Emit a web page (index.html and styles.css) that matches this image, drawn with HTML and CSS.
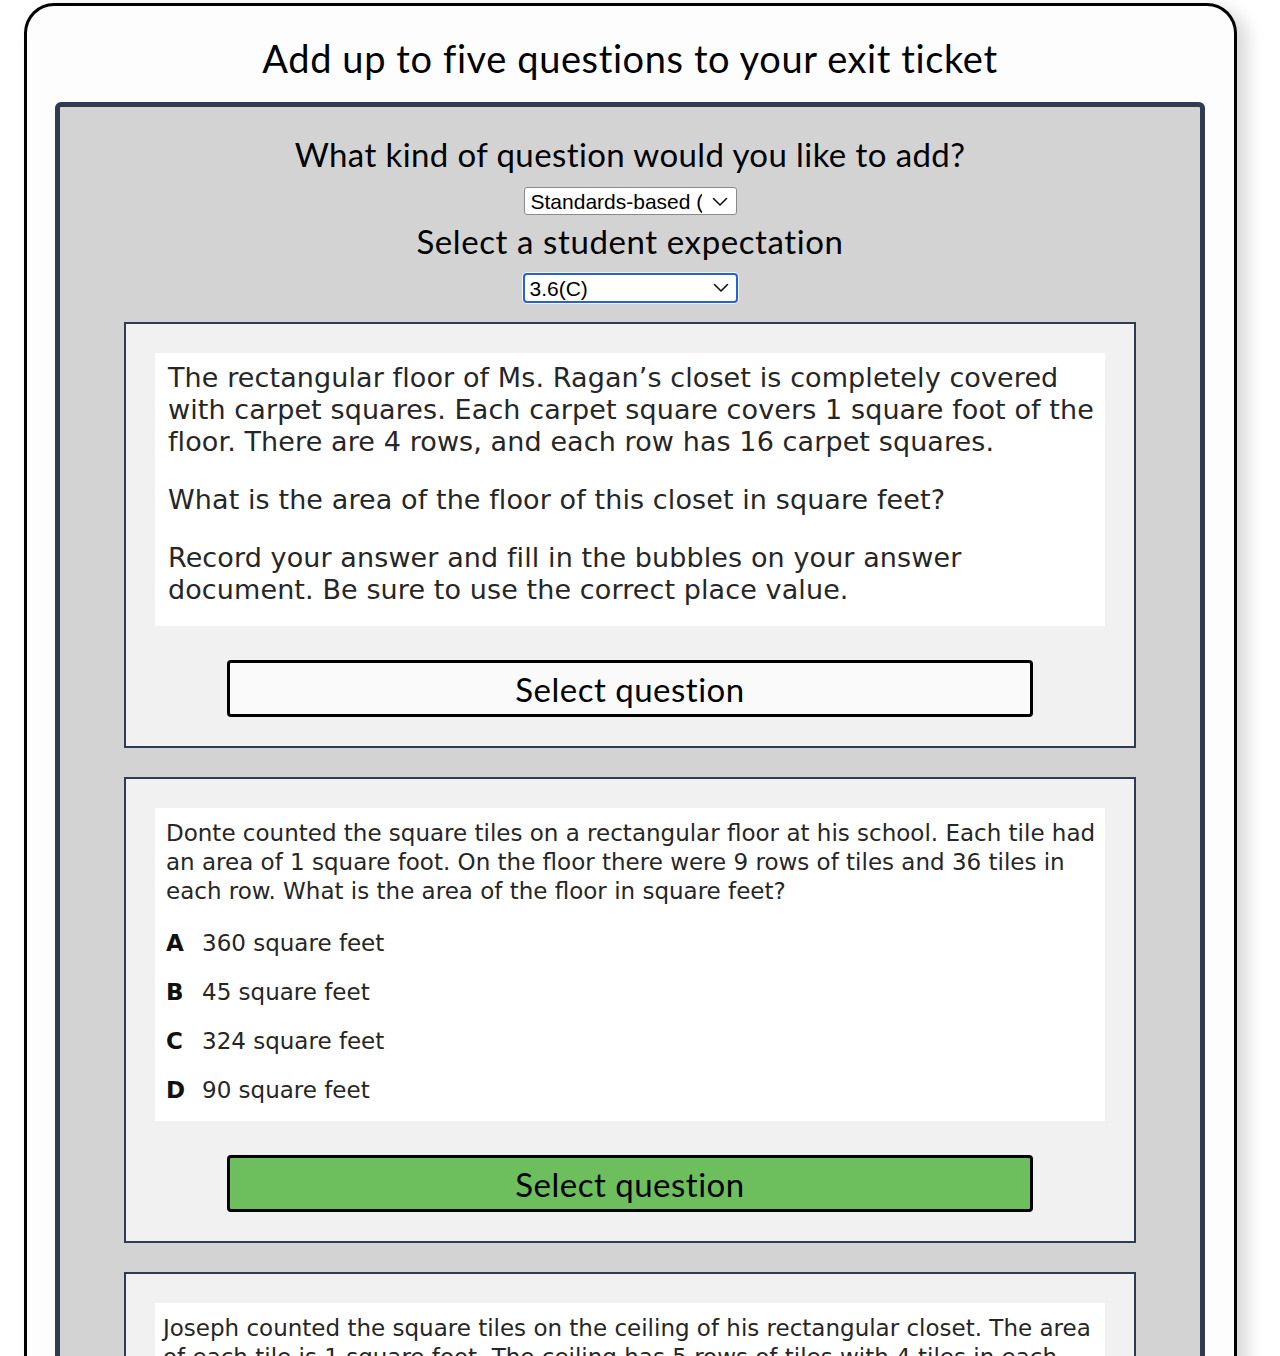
FILE: index.html
```html
<!DOCTYPE html>
<html lang="en">
<head>
<meta charset="utf-8">
<title>Exit ticket</title>
<link rel="stylesheet" href="styles.css">
</head>
<body>
<div class="page">
  <div class="ticket">
    <h1 class="title">Add up to five questions to your exit ticket</h1>
    <div class="panel">
      <h2 class="prompt prompt-first">What kind of question would you like to add?</h2>
      <div class="select-wrap">
        <select class="select"><option>Standards-based (TEKS)</option></select>
        <svg class="chev" width="16" height="10" viewBox="0 0 16 10"><path d="M1.5 1.5 L8 8 L14.5 1.5" fill="none" stroke="#111" stroke-width="1.6" stroke-linecap="round" stroke-linejoin="round"/></svg>
      </div>
      <h2 class="prompt prompt-second">Select a student expectation</h2>
      <div class="select-wrap select-wrap-focus">
        <select class="select select-focus"><option>3.6(C)</option></select>
        <svg class="chev" width="16" height="10" viewBox="0 0 16 10"><path d="M1.5 1.5 L8 8 L14.5 1.5" fill="none" stroke="#111" stroke-width="1.6" stroke-linecap="round" stroke-linejoin="round"/></svg>
      </div>

      <div class="qcard">
        <div class="qbody qbody-one">
          <p>The rectangular floor of Ms. Ragan’s closet is completely covered<br>with carpet squares. Each carpet square covers 1 square foot of the<br>floor. There are 4 rows, and each row has 16 carpet squares.</p>
          <p>What is the area of the floor of this closet in square feet?</p>
          <p>Record your answer and fill in the bubbles on your answer<br>document. Be sure to use the correct place value.</p>
        </div>
        <button class="select-btn">Select question</button>
      </div>

      <div class="qcard">
        <div class="qbody qbody-two">
          <p>Donte counted the square tiles on a rectangular floor at his school. Each tile had<br>an area of 1 square foot. On the floor there were 9 rows of tiles and 36 tiles in<br>each row. What is the area of the floor in square feet?</p>
          <ul class="options">
            <li><b>A</b><span>360 square feet</span></li>
            <li><b>B</b><span>45 square feet</span></li>
            <li><b>C</b><span>324 square feet</span></li>
            <li><b>D</b><span>90 square feet</span></li>
          </ul>
        </div>
        <button class="select-btn select-btn-active">Select question</button>
      </div>

      <div class="qcard">
        <div class="qbody qbody-three">
          <p>Joseph counted the square tiles on the ceiling of his rectangular closet. The area<br>of each tile is 1 square foot. The ceiling has 5 rows of tiles with 4 tiles in each<br>row. What is the area of the ceiling in square feet?</p>
        </div>
        <button class="select-btn">Select question</button>
      </div>
    </div>
  </div>
</div>
</body>
</html>
```

FILE: styles.css
```css
html, body {
  margin: 0;
  padding: 0;
  background: #ffffff;
}

.page {
  height: 1356px;
  overflow: hidden;
  padding: 3px 0 0 24px;
  box-sizing: border-box;
}

.ticket {
  width: 1213px;
  box-sizing: border-box;
  border: 3px solid #000;
  border-bottom: none;
  border-radius: 30px 30px 0 0;
  background: #fdfdfd;
  padding: 0 29px 40px 28px;
  min-height: 1500px;
  box-shadow: 10px 6px 18px rgba(0, 0, 0, 0.16);
}

.title {
  font-family: "Lato", "DejaVu Sans", sans-serif;
  font-weight: 400;
  font-size: 38px;
  line-height: 44px;
  margin: 30px 0 22px;
  text-align: center;
  color: #000;
  letter-spacing: 0.6px;
}

.panel {
  border: 5px solid #2e3b52;
  border-radius: 6px;
  background: #d3d3d3;
  padding: 0 64px 40px;
  display: flex;
  flex-direction: column;
  align-items: center;
}

.prompt {
  font-family: "Lato", "DejaVu Sans", sans-serif;
  font-weight: 400;
  font-size: 33px;
  line-height: 40px;
  margin: 27px 0 13px;
  color: #000;
  letter-spacing: 0.6px;
}

.prompt-first {
  letter-spacing: 0.4px;
}

.prompt-second {
  margin: 6px 0 12px;
}

.select-wrap {
  position: relative;
  width: 213px;
  height: 28px;
}

.select {
  -webkit-appearance: none;
  appearance: none;
  width: 100%;
  height: 100%;
  box-sizing: border-box;
  border: 1px solid #8a8a8a;
  border-radius: 3px;
  background: #fff;
  font-family: "Liberation Sans", Arial, sans-serif;
  font-size: 21px;
  color: #000;
  padding: 0 34px 0 6px;
  margin: 0;
}

.select-wrap-focus {
  width: 215px;
  height: 30px;
  margin-bottom: 19px;
}

.select-focus {
  border: 2px solid #2563d4;
  border-radius: 4px;
  box-shadow: 0 0 0 1px #f4f4f4;
  padding-left: 5px;
}

.chev {
  position: absolute;
  right: 9px;
  top: 10px;
  pointer-events: none;
}

.qcard {
  align-self: stretch;
  border: 2px solid #2e3b52;
  background: #f1f1f1;
  padding: 29px;
  margin-bottom: 29px;
  display: flex;
  flex-direction: column;
  align-items: center;
}

.qbody {
  align-self: stretch;
  background: #fff;
  font-family: "DejaVu Sans", Verdana, sans-serif;
  color: #262626;
  white-space: nowrap;
  overflow: hidden;
}

.qbody p {
  margin: 0;
}

.qbody-one {
  padding: 9px 13px 20px;
  font-size: 27px;
  line-height: 32px;
  letter-spacing: 0.1px;
}

.qbody-one p + p {
  margin-top: 26px;
}

.qbody-two {
  padding: 11px 11px 16px;
  font-size: 23px;
  line-height: 29px;
}

.qbody-three {
  padding: 11px 8px 18px;
  font-size: 23px;
  line-height: 29px;
}

.options {
  list-style: none;
  margin: 23px 0 0;
  padding: 0;
  display: flex;
  flex-direction: column;
  gap: 20px;
}

.options li {
  display: flex;
  font-size: 23px;
  line-height: 29px;
}

.options b {
  width: 36px;
  font-weight: 700;
  color: #111;
}

.select-btn {
  margin-top: 34px;
  width: 806px;
  height: 57px;
  box-sizing: border-box;
  border: 3px solid #000;
  border-radius: 4px;
  background: #fafafa;
  font-family: "Lato", "DejaVu Sans", sans-serif;
  font-size: 33px;
  color: #000;
  letter-spacing: 0.5px;
  padding: 0;
}

.select-btn-active {
  background: #6dbe5c;
}
```
